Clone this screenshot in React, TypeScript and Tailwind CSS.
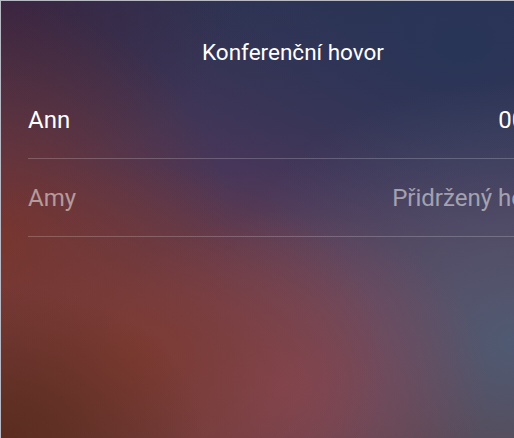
import * as React from "react"

const participants = [
  { name: "Ann", status: "00:12", active: true },
  { name: "Amy", status: "Přidržený hovor", active: false },
]

function ParticipantRow({ name, status, active }: { name: string; status: string; active: boolean }) {
  return (
    <div className="flex h-[78px] items-center justify-between border-b border-white/20">
      <span className={active ? "text-white" : "text-white/50"}>{name}</span>
      <span className={active ? "text-white" : "text-white/50"}>{status}</span>
    </div>
  )
}

export default function App() {
  return (
    <div className="h-[438px] w-[514px] overflow-hidden border-l border-t border-[#b9b9c6] bg-[#3a3352] bg-[radial-gradient(ellipse_40%_35%_at_0%_100%,#5a2c1e_0%,transparent_100%),radial-gradient(ellipse_50%_45%_at_25%_82%,#7e3b32_0%,transparent_100%),radial-gradient(ellipse_40%_40%_at_55%_88%,#86495a_0%,transparent_100%),radial-gradient(ellipse_60%_60%_at_100%_78%,#4f5a72_0%,transparent_100%),radial-gradient(ellipse_45%_55%_at_0%_55%,#75342e_0%,transparent_100%),radial-gradient(ellipse_45%_40%_at_0%_0%,#3c2540_0%,transparent_100%),radial-gradient(ellipse_55%_45%_at_90%_10%,#283557_0%,transparent_100%),linear-gradient(180deg,#2f3353_0%,#473659_38%,#653f55_70%,#5e3a3c_100%)]">
      <div className="w-[584px] px-[27px] font-['Roboto',sans-serif]">
        <div className="flex h-[80px] items-end justify-center pb-[11px] text-[22.5px] text-white">
          Konferenční hovor
        </div>
        <div className="text-[24px]">
          {participants.map((p) => (
            <ParticipantRow key={p.name} {...p} />
          ))}
        </div>
      </div>
    </div>
  )
}
